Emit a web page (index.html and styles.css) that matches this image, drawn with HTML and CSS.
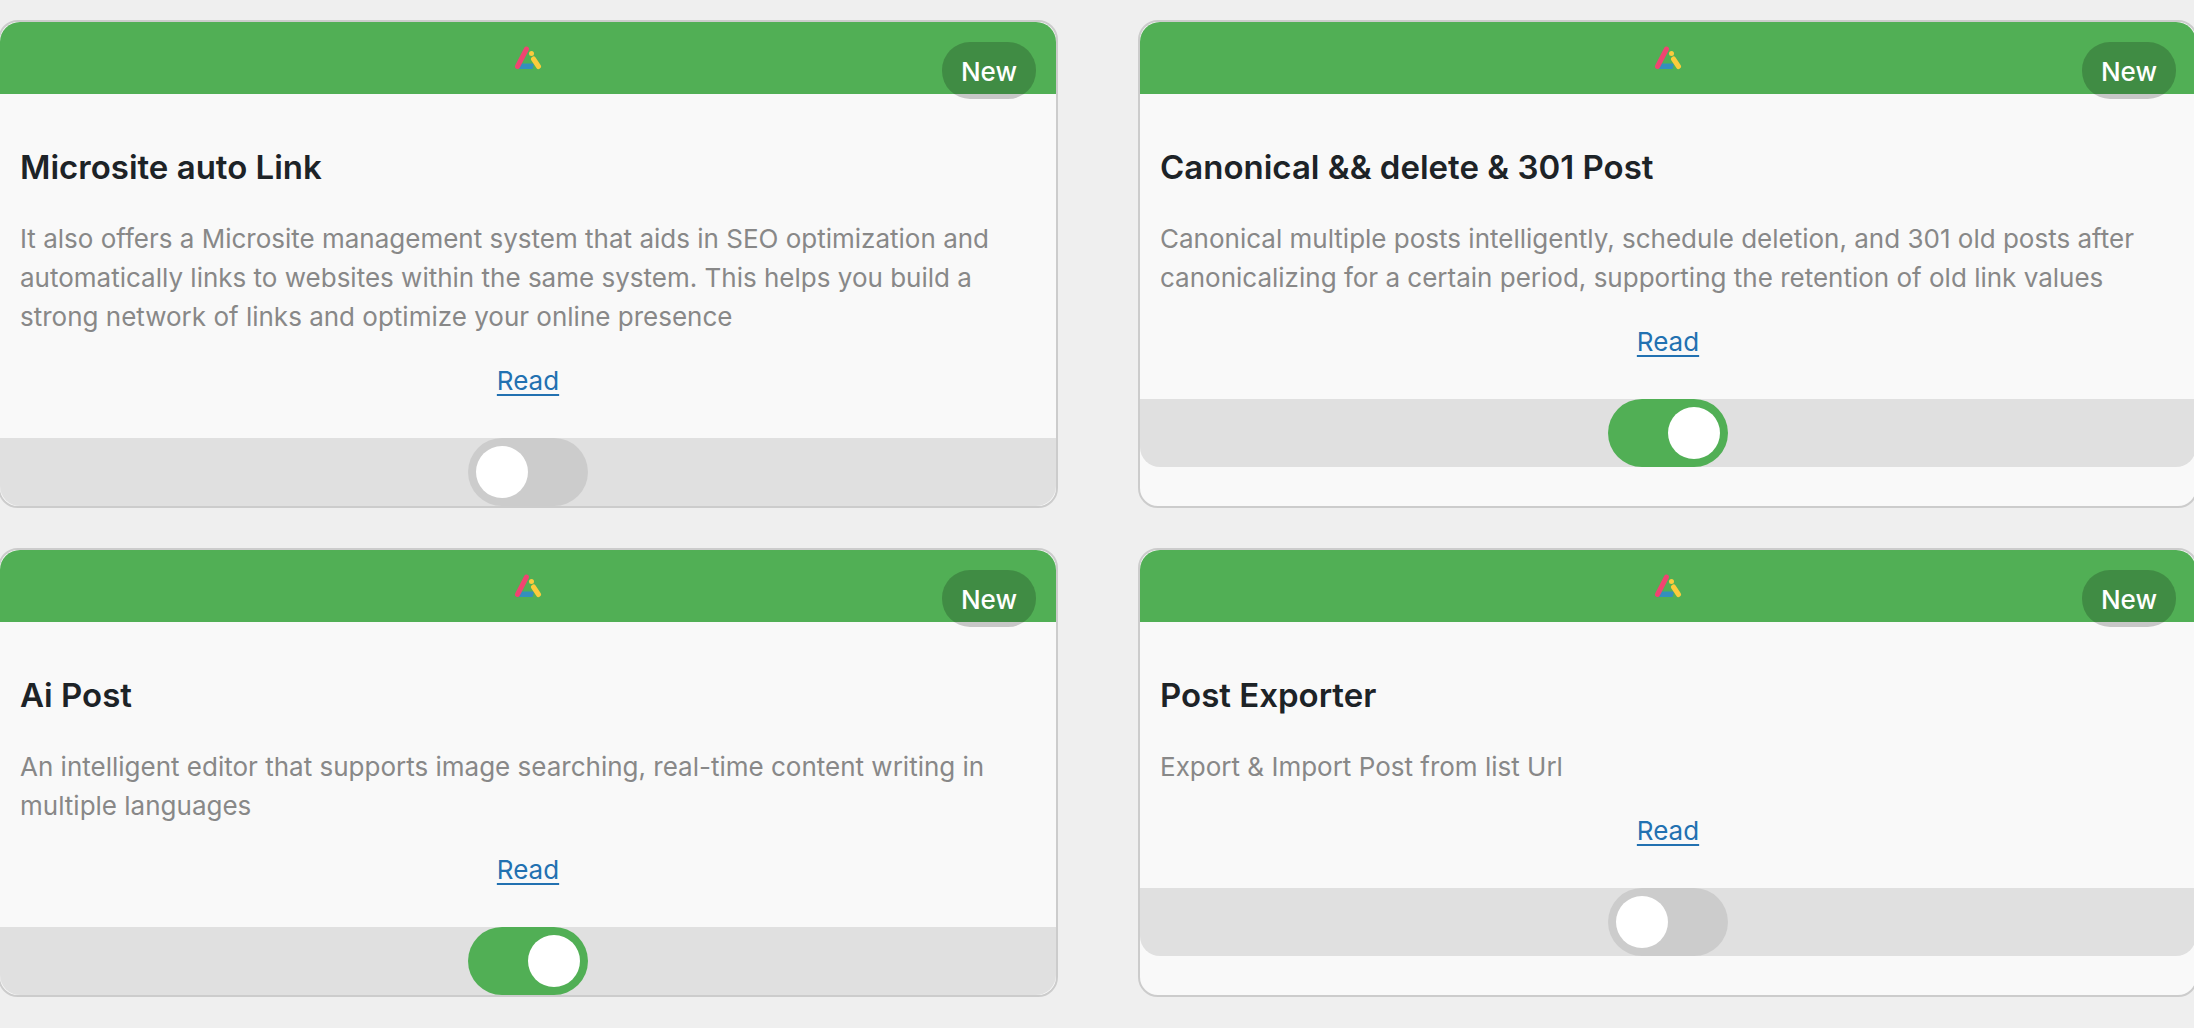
FILE: index.html
```html
<!DOCTYPE html>
<html lang="en">
<head>
<meta charset="utf-8">
<meta name="viewport" content="width=device-width, initial-scale=1">
<title>Modules</title>
<link rel="stylesheet" href="styles.css">
</head>
<body>
<svg class="sprite" aria-hidden="true">
  <symbol id="logo" viewBox="0 0 28 26">
    <path d="M6 18.500H20L18.500 24H5Z" fill="#348fbd"/>
    <path d="M3.500 21.500 12.500 4" fill="none" stroke="#f04471" stroke-width="5" stroke-linecap="round"/>
    <path d="M19.500 14 24.500 21.500" fill="none" stroke="#fccb3c" stroke-width="5" stroke-linecap="round"/>
    <circle cx="17.500" cy="8.500" r="2.500" fill="#fccb3c"/>
  </symbol>
</svg>
<main class="modules">
  <article class="card">
    <header class="card-head">
      <svg class="logo" aria-hidden="true"><use href="#logo"/></svg>
      <span class="badge">New</span>
    </header>
    <div class="card-body">
      <h2 class="title">Microsite auto Link</h2>
      <p class="text">It also offers a Microsite management system that aids in SEO optimization and automatically links to websites within the same system. This helps you build a strong network of links and optimize your online presence</p>
      <a class="read" href="#">Read</a>
    </div>
    <div class="card-foot"><input class="switch" type="checkbox" aria-label="Microsite auto Link"></div>
  </article>
  <article class="card">
    <header class="card-head">
      <svg class="logo" aria-hidden="true"><use href="#logo"/></svg>
      <span class="badge">New</span>
    </header>
    <div class="card-body">
      <h2 class="title">Canonical &amp;&amp; delete &amp; 301 Post</h2>
      <p class="text">Canonical multiple posts intelligently, schedule deletion, and 301 old posts after canonicalizing for a certain period, supporting the retention of old link values</p>
      <a class="read" href="#">Read</a>
    </div>
    <div class="card-foot"><input class="switch" type="checkbox" aria-label="Canonical, delete and 301 Post" checked></div>
  </article>
  <article class="card">
    <header class="card-head">
      <svg class="logo" aria-hidden="true"><use href="#logo"/></svg>
      <span class="badge">New</span>
    </header>
    <div class="card-body">
      <h2 class="title">Ai Post</h2>
      <p class="text">An intelligent editor that supports image searching, real-time content writing in multiple languages</p>
      <a class="read" href="#">Read</a>
    </div>
    <div class="card-foot"><input class="switch" type="checkbox" aria-label="Ai Post" checked></div>
  </article>
  <article class="card">
    <header class="card-head">
      <svg class="logo" aria-hidden="true"><use href="#logo"/></svg>
      <span class="badge">New</span>
    </header>
    <div class="card-body">
      <h2 class="title">Post Exporter</h2>
      <p class="text">Export &amp; Import Post from list Url</p>
      <a class="read" href="#">Read</a>
    </div>
    <div class="card-foot"><input class="switch" type="checkbox" aria-label="Post Exporter"></div>
  </article>
</main>
</body>
</html>
```
FILE: styles.css
```css
* {
  box-sizing: border-box;
}

body {
  margin: 0;
  background: #efefef;
  color: #1d2327;
  font: 26px/39px Inter, "Liberation Sans", sans-serif;
  overflow-x: hidden;
}

.sprite {
  display: none;
}

.modules {
  display: grid;
  grid-template-columns: 1fr 1fr;
  gap: 40px 80px;
  margin: 0 -4px 0 -2px;
  padding: 20px 0 32px;
}

.card {
  background: #f9f9f9;
  border: 2px solid #ccc;
  border-radius: 20px;
}

.card-head {
  position: relative;
  display: flex;
  align-items: center;
  justify-content: center;
  height: 72px;
  background: #51af55;
  border-radius: 20px 20px 0 0;
}

.logo {
  width: 28px;
  height: 26px;
}

.badge {
  position: absolute;
  top: 20px;
  right: 20px;
  padding: 11px 19px 9px;
  border-radius: 28px;
  background: rgba(0, 0, 0, 0.2);
  color: #fff;
  font-weight: 500;
  line-height: 37px;
}

.card-body {
  display: flex;
  flex-direction: column;
  padding: 49px 20px 38px;
}

.title {
  margin: 0 0 28px;
  font-size: 33px;
  font-weight: 600;
  line-height: 48px;
}

.text {
  margin: 0 0 25px;
  color: #888;
}

.read {
  align-self: center;
  color: #2271b1;
  text-decoration-thickness: 2px;
  text-underline-offset: 4px;
}

.card-foot {
  display: flex;
  justify-content: center;
  background: #e0e0e0;
  border-radius: 0 0 20px 20px;
}

.switch {
  appearance: none;
  display: flex;
  width: 120px;
  height: 68px;
  margin: 0;
  padding: 8px;
  border-radius: 34px;
  background: #ccc;
  cursor: pointer;
}

.switch::before {
  content: "";
  width: 52px;
  height: 52px;
  border-radius: 50%;
  background: #fff;
}

.switch:checked {
  justify-content: flex-end;
  background: #51af55;
}
```
